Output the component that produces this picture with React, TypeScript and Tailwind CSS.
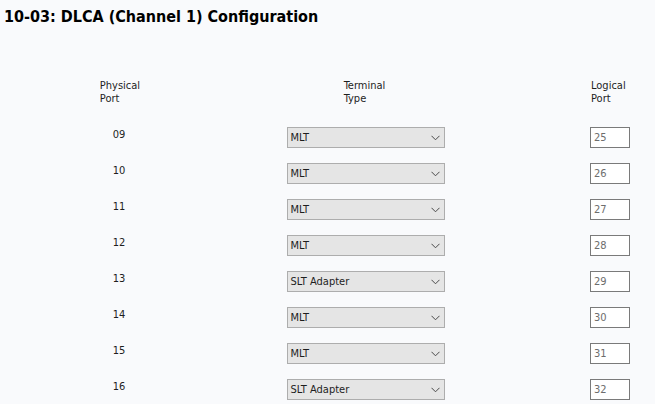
import React from "react";

const rows = [
  { p: "09", t: "MLT", l: "25" },
  { p: "10", t: "MLT", l: "26" },
  { p: "11", t: "MLT", l: "27" },
  { p: "12", t: "MLT", l: "28" },
  { p: "13", t: "SLT Adapter", l: "29" },
  { p: "14", t: "MLT", l: "30" },
  { p: "15", t: "MLT", l: "31" },
  { p: "16", t: "SLT Adapter", l: "32" },
];

function Chevron() {
  return (
    <svg width="9" height="6" viewBox="0 0 9 6" className="shrink-0">
      <path d="M0.5 0.8 L4.5 4.8 L8.5 0.8" fill="none" stroke="#4a4a4a" strokeWidth="1" />
    </svg>
  );
}

export default function App() {
  return (
    <div
      className="w-[655px] h-[404px] overflow-hidden bg-[#f9fafc] text-[#1e1e1e]"
      style={{ fontFamily: '"DejaVu Sans Condensed", "DejaVu Sans", sans-serif' }}
    >
      <h1 className="pl-[4px] pt-[7px] text-[16px] leading-[19px] font-bold text-black">
        10-03: DLCA (Channel 1) Configuration
      </h1>
      <div className="mt-[53px] text-[11px] leading-[13px]">
        <div className="flex">
          <div className="w-[240px] text-center">
            <div className="inline-block text-left">
              Physical
              <br />
              Port
            </div>
          </div>
          <div className="w-[249px] text-center">
            <div className="inline-block text-left">
              Terminal
              <br />
              Type
            </div>
          </div>
          <div className="pl-[102px]">
            Logical
            <br />
            Port
          </div>
        </div>
        <div className="mt-[22px] flex flex-col gap-[15px]">
          {rows.map((r) => (
            <div key={r.p} className="flex h-[21px]">
              <div className="w-[238px] text-center pt-[1px]">{r.p}</div>
              <div className="w-[255px] flex justify-center">
                <div className="w-[158px] h-[21px] bg-[#e5e5e5] border border-[#adadad] flex items-center justify-between pl-[3px] pr-[4px]">
                  <span>{r.t}</span>
                  <Chevron />
                </div>
              </div>
              <div className="pl-[97px]">
                <div className="w-[40px] h-[21px] border border-[#7a7a7a] bg-white flex items-center pl-[3px] text-[#6d6d6d]">
                  {r.l}
                </div>
              </div>
            </div>
          ))}
        </div>
      </div>
    </div>
  );
}
